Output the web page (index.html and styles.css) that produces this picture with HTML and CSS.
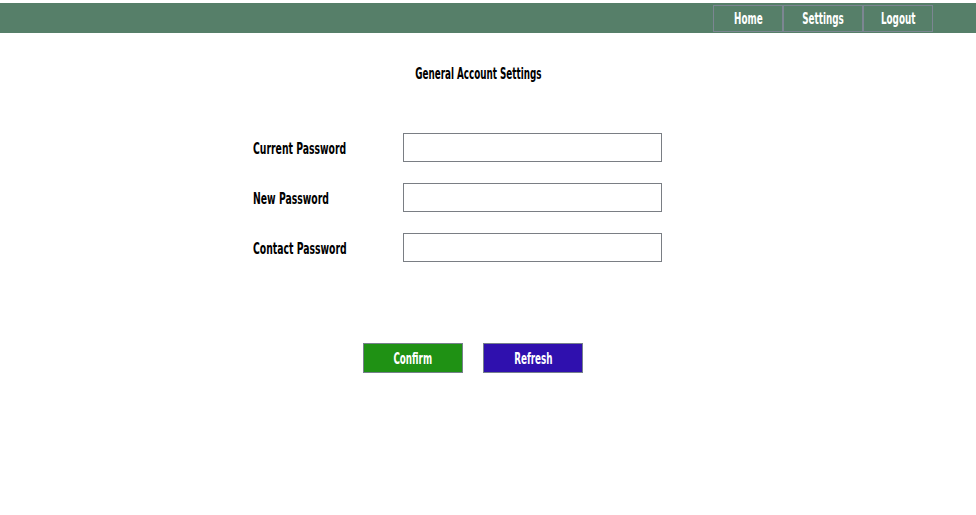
FILE: index.html
```html
<!DOCTYPE html>
<html>
<head>
<meta charset="utf-8">
<title>General Account Settings</title>
<link rel="stylesheet" href="styles.css">
</head>
<body>
<header class="topbar">
  <nav class="nav">
    <a class="nav-item nav-home" href="#"><span class="txt">Home</span></a>
    <a class="nav-item nav-settings" href="#"><span class="txt">Settings</span></a>
    <a class="nav-item nav-logout" href="#"><span class="txt">Logout</span></a>
  </nav>
</header>
<main class="main">
  <h1 class="title"><span class="txt">General Account Settings</span></h1>
  <form class="form">
    <div class="row"><label class="label"><span class="txt txt-left">Current Password</span></label><input class="field" type="password"></div>
    <div class="row"><label class="label"><span class="txt txt-left">New Password</span></label><input class="field" type="password"></div>
    <div class="row"><label class="label"><span class="txt txt-left">Contact Password</span></label><input class="field" type="password"></div>
    <div class="actions">
      <button type="button" class="btn btn-confirm"><span class="txt">Confirm</span></button>
      <button type="button" class="btn btn-refresh"><span class="txt">Refresh</span></button>
    </div>
  </form>
</main>
</body>
</html>
```
FILE: styles.css
```css
* { box-sizing: border-box; }
body {
  margin: 0;
  background: #fff;
  font-family: "DejaVu Sans Condensed", "DejaVu Sans", sans-serif;
  font-weight: bold;
  font-size: 16px;
}
.txt {
  display: inline-block;
  white-space: nowrap;
  transform: scaleX(0.61);
  transform-origin: center;
}
.txt-left {
  transform: scaleX(0.645);
  transform-origin: left center;
}
.topbar {
  margin-top: 3px;
  height: 30px;
  background: #567f69;
  display: flex;
  justify-content: flex-end;
  align-items: flex-start;
  padding: 2px 43px 0 0;
}
.nav { display: flex; }
.nav-item {
  height: 27px;
  border: 1px solid #7c8692;
  color: #fff;
  text-decoration: none;
  font-size: 16px;
  line-height: 16px;
  padding-top: 1px;
  display: flex;
  align-items: center;
  justify-content: center;
}
.nav-home { width: 70px; }
.nav-settings { width: 80px; }
.nav-logout { width: 70px; }
.main {
  margin-left: 253px;
  width: 450px;
}
.title {
  margin: 0;
  padding-top: 33px;
  font-size: 16px;
  line-height: 16px;
  text-align: center;
  color: #000;
}
.form {
  display: flex;
  flex-direction: column;
  margin-top: 51px;
}
.row {
  display: flex;
  align-items: center;
  height: 29px;
  margin-bottom: 21px;
}
.label {
  width: 150px;
  font-size: 16px;
  line-height: 16px;
  padding-top: 2px;
  color: #000;
}
.field {
  width: 259px;
  height: 29px;
  border: 1px solid #7a7e84;
  margin: 0;
  padding: 0 4px;
}
.actions {
  display: flex;
  justify-content: center;
  gap: 20px;
  padding-right: 10px;
  margin-top: 60px;
}
.btn {
  width: 100px;
  height: 30px;
  border: 1px solid #76808c;
  color: #fff;
  font-family: inherit;
  font-weight: bold;
  font-size: 16px;
  line-height: 16px;
  padding: 2px 0 0;
}
.btn-confirm { background: #1f9114; }
.btn-refresh { background: #2f10ae; }
```
